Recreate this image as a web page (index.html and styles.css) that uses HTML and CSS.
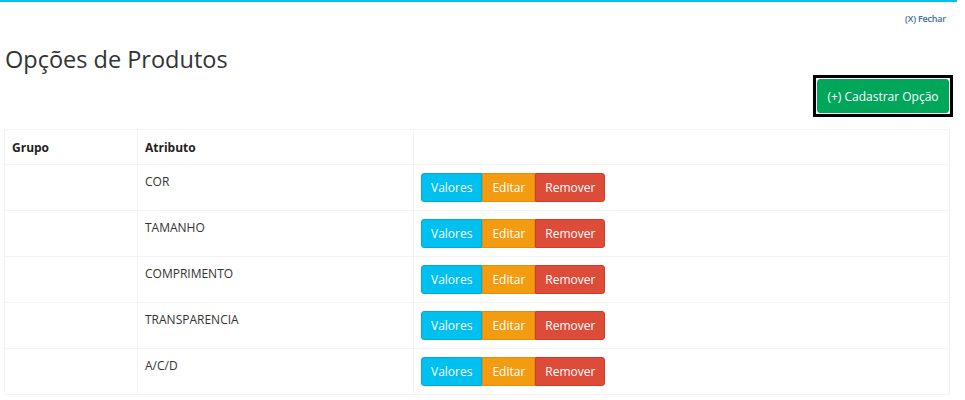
FILE: index.html
```html
<!DOCTYPE html>
<html lang="pt">
<head>
<meta charset="utf-8">
<title>Opções de Produtos</title>
<link rel="stylesheet" href="styles.css">
</head>
<body>
<div class="topline"></div>
<div class="close-row"><a class="close-link" href="#">(X) Fechar</a></div>
<h1 class="title">Opções de Produtos</h1>
<div class="actions"><span class="focus-ring"><button class="btn btn-success">(+) Cadastrar Opção</button></span></div>
<table class="grid">
  <thead>
    <tr><th class="c1">Grupo</th><th class="c2">Atributo</th><th></th></tr>
  </thead>
  <tbody>
    <tr><td></td><td>COR</td><td><div class="btn-group"><button class="btn btn-info">Valores</button><button class="btn btn-warning">Editar</button><button class="btn btn-danger">Remover</button></div></td></tr>
    <tr><td></td><td>TAMANHO</td><td><div class="btn-group"><button class="btn btn-info">Valores</button><button class="btn btn-warning">Editar</button><button class="btn btn-danger">Remover</button></div></td></tr>
    <tr><td></td><td>COMPRIMENTO</td><td><div class="btn-group"><button class="btn btn-info">Valores</button><button class="btn btn-warning">Editar</button><button class="btn btn-danger">Remover</button></div></td></tr>
    <tr><td></td><td>TRANSPARENCIA</td><td><div class="btn-group"><button class="btn btn-info">Valores</button><button class="btn btn-warning">Editar</button><button class="btn btn-danger">Remover</button></div></td></tr>
    <tr><td></td><td>A/C/D</td><td><div class="btn-group"><button class="btn btn-info">Valores</button><button class="btn btn-warning">Editar</button><button class="btn btn-danger">Remover</button></div></td></tr>
  </tbody>
</table>
</body>
</html>
```

FILE: styles.css
```css
html, body {
  margin: 0;
  padding: 0;
  background: #fff;
  font-family: "Open Sans", "Liberation Sans", sans-serif;
  color: #333;
}
.topline {
  height: 2px;
  background: #00c0ef;
  margin-right: 8px;
}
.close-row {
  display: flex;
  justify-content: flex-end;
  padding: 10px 19px 0 0;
}
.close-link {
  font-size: 9px;
  font-weight: 600;
  line-height: 14px;
  letter-spacing: -0.2px;
  color: #3c6e9f;
  text-decoration: none;
}
.title {
  margin: 16px 0 0 5px;
  font-size: 23.5px;
  font-weight: 400;
  line-height: 34px;
  color: #333;
}
.actions {
  display: flex;
  justify-content: flex-end;
  padding: 0 12px 0 0;
  margin-top: -1px;
}
.focus-ring {
  display: flex;
  border: 3px solid #000;
  padding: 1px;
}
.btn {
  font-family: "Open Sans", "Liberation Sans", sans-serif;
  font-size: 12px;
  line-height: 17px;
  padding: 5px 9px;
  border: 1px solid transparent;
  color: #fff;
  cursor: pointer;
}
.btn-success {
  background: #00a65a;
  border-color: #00a65a;
  border-radius: 3px;
  width: 132px;
  height: 34px;
  padding: 0;
  font-size: 12px;
  text-align: center;
}
.grid {
  margin: 12px 0 0 4px;
  width: 946px;
  border-collapse: collapse;
  border: 1px solid #f4f4f4;
  font-size: 12px;
  line-height: 17px;
}
.grid th, .grid td {
  border: 1px solid #f4f4f4;
  padding: 8px 7px;
  text-align: left;
  vertical-align: top;
}
.grid th {
  padding: 9px 7px 8px;
  font-weight: 700;
  color: #222;
}
.c1 { width: 118px; }
.c2 { width: 261px; }
.btn-group {
  display: flex;
}
.btn-info {
  background: #00c0ef;
  border-color: #00acd6;
  border-radius: 3px 0 0 3px;
}
.btn-warning {
  background: #f39c12;
  border-color: #e08e0b;
  border-radius: 0;
}
.btn-danger {
  background: #dd4b39;
  border-color: #d73925;
  border-radius: 0 3px 3px 0;
}
```
